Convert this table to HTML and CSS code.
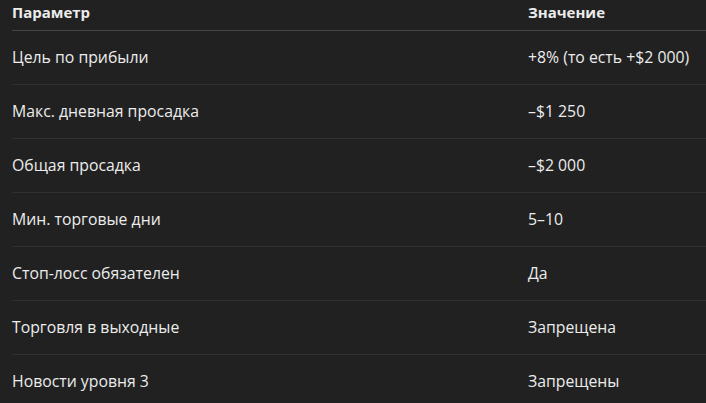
FILE: index.html
```html
<!DOCTYPE html>
<html lang="ru">
<head>
<meta charset="utf-8">
<link rel="stylesheet" href="styles.css">
</head>
<body>
<table class="params">
  <thead>
    <tr><th class="col-name">Параметр</th><th class="col-value">Значение</th></tr>
  </thead>
  <tbody>
    <tr><td>Цель по прибыли</td><td>+8% (то есть +$2 000)</td></tr>
    <tr><td>Макс. дневная просадка</td><td>–$1 250</td></tr>
    <tr><td>Общая просадка</td><td>–$2 000</td></tr>
    <tr><td>Мин. торговые дни</td><td>5–10</td></tr>
    <tr><td>Стоп-лосс обязателен</td><td>Да</td></tr>
    <tr><td>Торговля в выходные</td><td>Запрещена</td></tr>
    <tr><td>Новости уровня 3</td><td>Запрещены</td></tr>
  </tbody>
</table>
</body>
</html>
```
FILE: styles.css
```css
html, body {
  margin: 0;
  padding: 0;
  background: #212121;
  overflow: hidden;
}
.params {
  margin-left: 12px;
  width: 720px;
  border-collapse: collapse;
  font-family: "Open Sans", "Noto Sans", sans-serif;
  color: #ececec;
}
.params th {
  text-align: left;
  font-size: 15px;
  font-weight: 700;
  line-height: 24px;
  padding: 0 0 6px 0;
  border-bottom: 1px solid #474747;
}
.params .col-name { width: 516px; }
.params td {
  font-size: 15.8px;
  line-height: 24px;
  padding: 14px 0 15px 0;
  border-bottom: 1px solid #303030;
}
.params tbody tr:last-child td { border-bottom: none; }
```
